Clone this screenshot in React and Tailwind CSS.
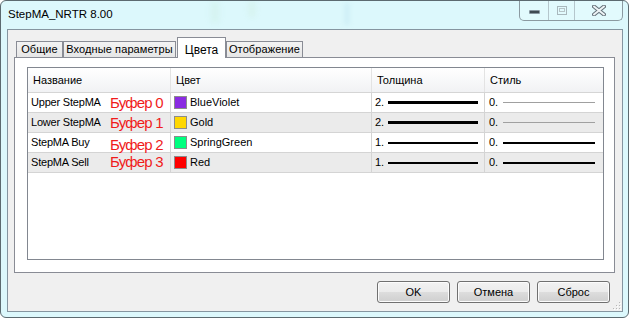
import React from 'react';

const rows = [
  { name: 'Upper StepMA', buf: 'Буфер 0', color: '#8a2be2', cname: 'BlueViolet', w: '2.', thick: 'h-[3px]', styleLine: 'h-[1px] bg-[#a0a0a0]', bg: 'bg-white', bufOff: '' },
  { name: 'Lower StepMA', buf: 'Буфер 1', color: '#ffd700', cname: 'Gold', w: '2.', thick: 'h-[3px]', styleLine: 'h-[1px] bg-[#a0a0a0]', bg: 'bg-[#ebebeb]', bufOff: '' },
  { name: 'StepMA Buy', buf: 'Буфер 2', color: '#00ff7f', cname: 'SpringGreen', w: '1.', thick: 'h-[2px]', styleLine: 'h-[2px] bg-black', bg: 'bg-white', bufOff: 'mt-[3px]' },
  { name: 'StepMA Sell', buf: 'Буфер 3', color: '#ff0000', cname: 'Red', w: '1.', thick: 'h-[2px]', styleLine: 'h-[2px] bg-black', bg: 'bg-[#ebebeb]', bufOff: '-mt-[2px]' },
];

function Tab({ label, active, w }) {
  if (active) {
    return (
      <div className={`${w} h-[21px] -mb-[1px] relative z-10 bg-white border border-b-0 border-[#898c95] flex items-start justify-center pt-[3px] text-[12px] whitespace-nowrap text-black`}>
        {label}
      </div>
    );
  }
  return (
    <div className={`${w} h-[16px] bg-[linear-gradient(#f3f3f3,#e6e6e6)] border border-b-0 border-[#898c95] flex items-center justify-center text-[11px] tracking-[0.1px] whitespace-nowrap text-black`}>
      {label}
    </div>
  );
}

function Btn({ label }) {
  return (
    <div className="w-[73px] h-[22px] rounded-[3px] border border-[#707070] bg-[linear-gradient(#f2f2f2_0%,#ebebeb_50%,#dddddd_50%,#cfcfcf_100%)] shadow-[inset_0_0_0_1px_#fcfcfc] flex items-center justify-center text-[11px] text-black">
      {label}
    </div>
  );
}

export default function App() {
  return (
    <div className="w-[629px] h-[318px] bg-white" style={{ fontFamily: '"Liberation Sans", Arial, sans-serif' }}>
      <div className="w-[629px] h-[318px] relative rounded-[6px] border border-[#5c6a70] bg-[#dcf8fc] flex flex-col overflow-hidden">
        {/* blurred background hints */}
        <div className="absolute left-[210px] top-0 w-[8px] h-[22px] bg-[#c4ead6] opacity-30 blur-[3px]" />
        <div className="absolute left-[248px] top-0 w-[6px] h-[16px] bg-[#c8e6cc] opacity-30 blur-[3px]" />
        <div className="absolute left-[343px] top-[2px] w-[6px] h-[22px] bg-[#c4e8f2] opacity-50 blur-[2px]" />
        {/* title bar */}
        <div className="h-[28px] relative flex items-start">
          <div className="pl-[7px] pt-[8px] text-[11.5px] text-black leading-none">StepMA_NRTR 8.00</div>
          <div className="absolute left-[518px] -top-[1px] w-[104px] h-[21px] border border-t-0 border-[#8b9aa1] rounded-b-[5px] flex bg-[#e2fafd]">
            <div className="w-[29px] h-full border-r border-[#b5c6cc] flex items-center justify-center">
              <div className="w-[11px] h-[4px] mt-[4px] bg-[#3f4a52] border border-[#8796a0] rounded-[1px]" />
            </div>
            <div className="w-[26px] h-full border-r border-[#b5c6cc] flex items-center justify-center">
              <div className="w-[10px] h-[9px] border border-[#a9b8bd] flex items-center justify-center">
                <div className="w-[6px] h-[4px] border border-[#b7c4c8]" />
              </div>
            </div>
            <div className="flex-1 flex items-center justify-center">
              <svg width="14" height="11" viewBox="0 0 14 11">
                <path d="M2 1.5 L12 9.5 M12 1.5 L2 9.5" stroke="#66727b" strokeWidth="4" strokeLinecap="round" />
                <path d="M2 1.5 L12 9.5 M12 1.5 L2 9.5" stroke="#eef4f6" strokeWidth="2" strokeLinecap="round" />
              </svg>
            </div>
          </div>
        </div>
        {/* client area */}
        <div className="ml-[6px] w-[616px] h-[283px] border border-[#8595a0] bg-[#f0f0f0] flex flex-col relative">
          {/* tabs */}
          <div className="pl-[8px] pt-[7px] flex items-end h-[27px]">
            <Tab label="Общие" w="w-[47px]" />
            <Tab label="Входные параметры" w="w-[113px]" />
            <div className="w-[1px]" />
            <Tab label="Цвета" w="w-[49px]" active />
            <Tab label="Отображение" w="w-[77px]" />
          </div>
          {/* panel */}
          <div className="ml-[6px] w-[601px] h-[216px] border border-[#898c95] bg-white">
            <div className="ml-[12px] mt-[9px] w-[577px] h-[193px] border border-[#828790] bg-white flex flex-col text-[11px] text-black">
              {/* header */}
              <div className="h-[25px] border-b border-[#d5d5d5] bg-[linear-gradient(#ffffff,#f1f2f4)] flex">
                <div className="w-[143px] border-r border-[#e3e3e3] pl-[5px] flex items-center">Название</div>
                <div className="w-[201px] border-r border-[#e3e3e3] pl-[5px] flex items-center">Цвет</div>
                <div className="w-[113px] border-r border-[#e3e3e3] pl-[5px] flex items-center">Толщина</div>
                <div className="flex-1 pl-[5px] flex items-center">Стиль</div>
              </div>
              {rows.map((r) => (
                <div key={r.name} className={`h-[20px] border-b border-[#d4d4d4] flex ${r.bg}`}>
                  <div className="w-[143px] border-r border-[#d4d4d4] pl-[3px] flex items-center">
                    <span className="w-[79px] tracking-[-0.2px] whitespace-nowrap">{r.name}</span>
                    <span className={`text-[15px] leading-none text-[#f01c1c] tracking-[-0.8px] whitespace-nowrap ${r.bufOff}`}>{r.buf}</span>
                  </div>
                  <div className="w-[201px] border-r border-[#d4d4d4] pl-[3px] flex items-center gap-[3px]">
                    <div className="w-[13px] h-[13px] border border-[#8c8c8c]" style={{ backgroundColor: r.color }} />
                    <span>{r.cname}</span>
                  </div>
                  <div className="w-[113px] border-r border-[#d4d4d4] pl-[3px] pr-[6px] flex items-center justify-between">
                    <span>{r.w}</span>
                    <div className={`w-[90px] ${r.thick} bg-black`} />
                  </div>
                  <div className="flex-1 pl-[4px] pr-[8px] flex items-center justify-between">
                    <span>0.</span>
                    <div className={`w-[92px] ${r.styleLine}`} />
                  </div>
                </div>
              ))}
            </div>
          </div>
          {/* buttons */}
          <div className="mt-[8px] pr-[12px] flex justify-end gap-[7px]">
            <Btn label="OK" />
            <Btn label="Отмена" />
            <Btn label="Сброс" />
          </div>
          {/* size grip */}
          <svg className="absolute right-[1px] bottom-[1px]" width="10" height="10" viewBox="0 0 10 10">
            {[[8, 2], [5, 5], [8, 5], [2, 8], [5, 8], [8, 8]].map(([x, y], i) => (
              <g key={i}>
                <rect x={x} y={y} width="1" height="1" fill="#b8b8b8" />
                <rect x={x + 1} y={y + 1} width="1" height="1" fill="#ffffff" />
              </g>
            ))}
          </svg>
        </div>
      </div>
    </div>
  );
}
